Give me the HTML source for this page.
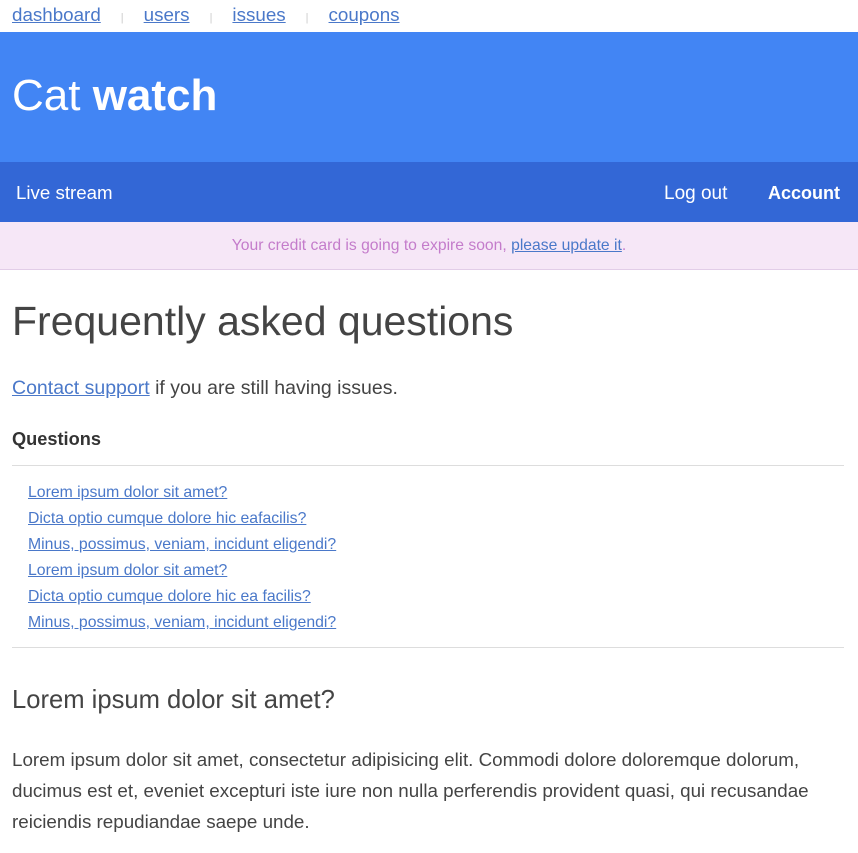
<!DOCTYPE html>
<html><head><meta charset="utf-8"><style>
body{margin:0;width:858px;height:853px;position:relative;font-family:"Liberation Sans",Arial,sans-serif;color:#444;background:#fff;overflow:hidden}
.a{position:absolute;white-space:nowrap;line-height:1}
a{color:#4a78c9;text-decoration:underline}
</style></head><body>
<div class="a" style="left:12px;top:6px;font-size:18.8px">
<a>dashboard</a><span style="color:#ccc;font-size:11px;margin:0 20px">|</span><a>users</a><span style="color:#ccc;font-size:11px;margin:0 20px">|</span><a>issues</a><span style="color:#ccc;font-size:11px;margin:0 20px">|</span><a>coupons</a></div>
<div style="position:absolute;left:0;top:32px;width:858px;height:130px;background:#4285f4"></div>
<div class="a" style="left:12px;top:74px;font-size:44px;color:#fff">Cat <b>watch</b></div>
<div style="position:absolute;left:0;top:162px;width:858px;height:60px;background:#3367d6"></div>
<div class="a" style="left:16px;top:184px;font-size:18.7px;color:#fff">Live stream</div>
<div class="a" style="left:664px;top:184px;font-size:19px;color:#fff">Log out</div>
<div class="a" style="left:768px;top:184px;font-size:18px;color:#fff;font-weight:bold">Account</div>
<div style="position:absolute;left:0;top:222px;width:858px;height:47px;background:#f6e7f7;border-bottom:1px solid #e2cde8"></div>
<div class="a" style="left:0;width:858px;text-align:center;top:238px;font-size:15.7px;color:#c47ccb">Your credit card is going to expire soon, <a>please update it</a>.</div>
<div class="a" style="left:12px;top:301px;font-size:41px;color:#444">Frequently asked questions</div>
<div class="a" style="left:12px;top:379px;font-size:19.5px"><a>Contact support</a> if you are still having issues.</div>
<div class="a" style="left:12px;top:430px;font-size:18.2px;font-weight:bold;color:#333">Questions</div>
<div style="position:absolute;left:12px;top:465px;width:832px;height:1px;background:#ddd"></div>
<div class="a" style="left:28px;top:480px;font-size:15.8px;line-height:26px"><a>Lorem ipsum dolor sit amet?</a><br><a>Dicta optio cumque dolore hic eafacilis?</a><br><a>Minus, possimus, veniam, incidunt eligendi?</a><br><a>Lorem ipsum dolor sit amet?</a><br><a>Dicta optio cumque dolore hic ea facilis?</a><br><a>Minus, possimus, veniam, incidunt eligendi?</a></div>
<div style="position:absolute;left:12px;top:647px;width:832px;height:1px;background:#ddd"></div>
<div class="a" style="left:12px;top:688px;font-size:25.6px;color:#444">Lorem ipsum dolor sit amet?</div>
<div class="a" style="left:12px;top:744px;font-size:18.8px;line-height:31px;color:#444">Lorem ipsum dolor sit amet, consectetur adipisicing elit. Commodi dolore doloremque dolorum,<br>ducimus est et, eveniet excepturi iste iure non nulla perferendis provident quasi, qui recusandae<br>reiciendis repudiandae saepe unde.</div>
</body></html>
